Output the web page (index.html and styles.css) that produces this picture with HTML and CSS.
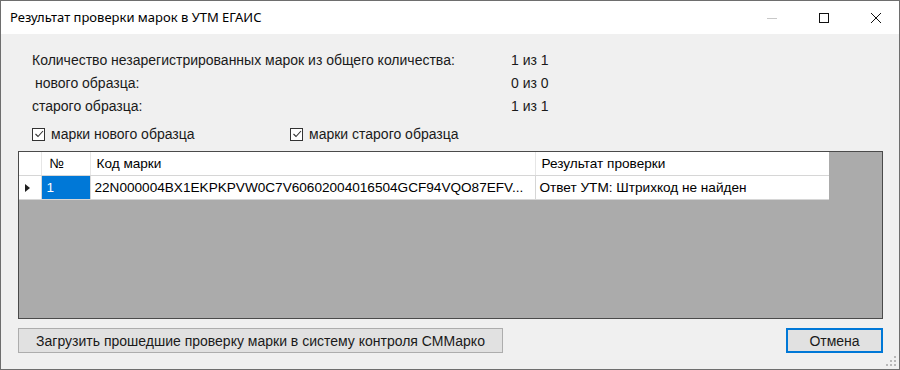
FILE: index.html
```html
<!DOCTYPE html>
<html lang="ru">
<head>
  <meta charset="UTF-8">
  <title>Результат проверки марок в УТМ ЕГАИС</title>
  <link rel="stylesheet" href="styles.css">
</head>
<body>

<div class="window">
  <div class="titlebar">
    <span class="title">Результат проверки марок в УТМ ЕГАИС</span>
    <div class="controls">
      <span class="ctl ctl-min"><svg width="10" height="10" viewBox="0 0 10 10"><path d="M0 5.5h10" stroke="#c8c8c8" stroke-width="1"/></svg></span>
      <span class="ctl"><svg width="10" height="10" viewBox="0 0 10 10"><rect x="0.5" y="0.5" width="9" height="9" fill="none" stroke="#111" stroke-width="1"/></svg></span>
      <span class="ctl"><svg width="10" height="10" viewBox="0 0 10 10"><path d="M0 0L10 10M10 0L0 10" stroke="#111" stroke-width="1"/></svg></span>
    </div>
  </div>

  <div class="content">
    <div class="stats">
      <div class="stat-label">Количество незарегистрированных марок из общего количества:</div>
      <div class="stat-value">1 из 1</div>
      <div class="stat-label indent">нового образца:</div>
      <div class="stat-value">0 из 0</div>
      <div class="stat-label">старого образца:</div>
      <div class="stat-value">1 из 1</div>
    </div>

    <div class="checks">
      <label class="check check-new"><span class="box"><svg width="10" height="10" viewBox="0 0 10 10"><path d="M1.5 5l2.5 2.5 5-5.5" fill="none" stroke="#333" stroke-width="1.1"/></svg></span>марки нового образца</label>
      <label class="check"><span class="box"><svg width="10" height="10" viewBox="0 0 10 10"><path d="M1.5 5l2.5 2.5 5-5.5" fill="none" stroke="#333" stroke-width="1.1"/></svg></span>марки старого образца</label>
    </div>

    <div class="grid">
      <table>
        <colgroup>
          <col class="w-rowhead">
          <col class="w-num">
          <col class="w-code">
          <col class="w-res">
        </colgroup>
        <thead>
          <tr>
            <th class="rowhead"></th>
            <th class="col-num">№</th>
            <th>Код марки</th>
            <th>Результат проверки</th>
          </tr>
        </thead>
        <tbody>
          <tr>
            <td class="rowhead"><span class="arrow"></span></td>
            <td class="col-num selected">1</td>
            <td>22N000004BX1EKPKPVW0C7V60602004016504GCF94VQO87EFV...</td>
            <td>Ответ УТМ: Штрихкод не найден</td>
          </tr>
        </tbody>
      </table>
    </div>

    <div class="actions">
      <button class="btn btn-upload" type="button">Загрузить прошедшие проверку марки в систему контроля СММарко</button>
      <button class="btn btn-cancel" type="button">Отмена</button>
    </div>
  </div>

  <svg class="grip" width="10" height="10" viewBox="0 0 10 10">
    <rect x="8" y="0" width="2" height="2" fill="#b8b8b8"/>
    <rect x="4" y="4" width="2" height="2" fill="#b8b8b8"/>
    <rect x="8" y="4" width="2" height="2" fill="#b8b8b8"/>
    <rect x="0" y="8" width="2" height="2" fill="#b8b8b8"/>
    <rect x="4" y="8" width="2" height="2" fill="#b8b8b8"/>
    <rect x="8" y="8" width="2" height="2" fill="#b8b8b8"/>
  </svg>
</div>

</body>
</html>
```

FILE: styles.css
```css
body { margin: 0; background: #fff; font-family: 'Liberation Sans', Arial, sans-serif; font-size: 14px; color: #000; }
.window { position: relative; width: 900px; height: 370px; box-sizing: border-box; border: 1px solid #6e6e6e; background: #f0f0f0; display: flex; flex-direction: column; }
.titlebar { height: 33px; background: #fff; display: flex; align-items: center; justify-content: space-between; }
.title { font-family: 'Noto Sans', 'Open Sans', sans-serif; font-size: 13px; color: #000; margin-left: 9px; margin-top: -1px; }
.controls { display: flex; height: 100%; }
.ctl { width: 46px; height: 100%; display: flex; align-items: center; justify-content: center; margin-left: 6px; }
.ctl-min { margin-left: 0; }
.content { flex: 1; padding: 0 16px 0 17px; display: flex; flex-direction: column; }
.stats { display: grid; grid-template-columns: 479px auto; grid-template-rows: 24px 22px 23px; align-items: center; margin-top: 14px; padding-left: 14px; color: #1a1a1a; }
.stat-label.indent { padding-left: 3px; }
.checks { display: flex; align-items: center; height: 20px; margin-top: 7px; padding-left: 14px; }
.check { display: flex; align-items: center; gap: 6px; color: #1a1a1a; }
.check-new { width: 258px; }
.box { width: 11px; height: 11px; border: 1px solid #333; background: #fff; display: flex; align-items: center; justify-content: center; }
.grid { margin-top: 7px; height: 166px; border: 1px solid #4a4a4a; background: #ababab; }
.grid table { border-collapse: collapse; table-layout: fixed; width: 810px; background: #fff; font-size: 13.6px; }
.w-rowhead { width: 22px; }
.w-num { width: 49px; }
.w-code { width: 445px; }
.w-res { width: 294px; }
.grid th, .grid td { height: 23px; padding: 0 0 0 4px; text-align: left; font-weight: normal; white-space: nowrap; overflow: hidden; border-left: 1px solid #d6d6d6; border-bottom: 1px solid #d6d6d6; }
.grid th { padding-left: 6px; border-left-color: #e6e6e6; }
.grid .rowhead { padding: 0; border-left: none; position: relative; }
.grid th.col-num { padding-left: 8px; }
.grid td.col-num { padding-left: 5px; }
.selected { background: #0078d7; color: #fff; }
.arrow { position: absolute; left: 6px; top: 8px; border-left: 5px solid #1e1e1e; border-top: 4px solid transparent; border-bottom: 4px solid transparent; }
.actions { display: flex; justify-content: space-between; margin-top: 9px; }
.btn { height: 25px; font-family: 'Liberation Sans', Arial, sans-serif; font-size: 14px; color: #1a1a1a; background: #e1e1e1; border: 1px solid #adadad; padding: 0; }
.btn-upload { width: 485px; }
.btn-cancel { width: 97px; border: 2px solid #0078d7; }
.grip { position: absolute; right: 3px; bottom: 3px; }
```
